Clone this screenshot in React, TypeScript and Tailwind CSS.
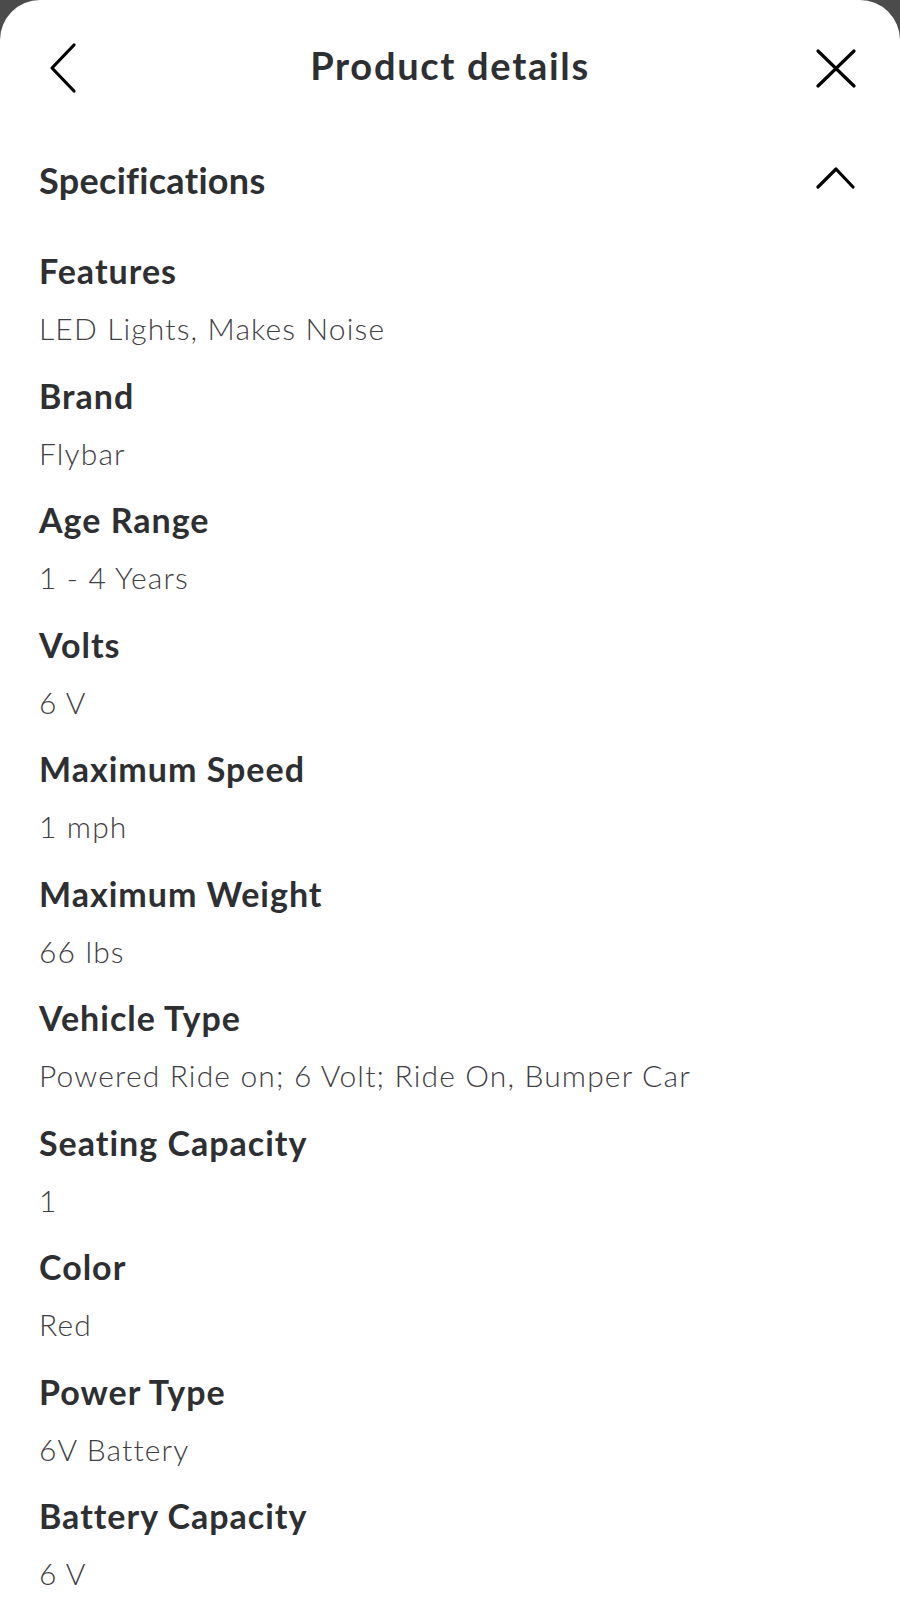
const specs: { label: string; value: string }[] = [
  { label: 'Features', value: 'LED Lights, Makes Noise' },
  { label: 'Brand', value: 'Flybar' },
  { label: 'Age Range', value: '1 - 4 Years' },
  { label: 'Volts', value: '6 V' },
  { label: 'Maximum Speed', value: '1 mph' },
  { label: 'Maximum Weight', value: '66 lbs' },
  { label: 'Vehicle Type', value: 'Powered Ride on; 6 Volt; Ride On, Bumper Car' },
  { label: 'Seating Capacity', value: '1' },
  { label: 'Color', value: 'Red' },
  { label: 'Power Type', value: '6V Battery' },
  { label: 'Battery Capacity', value: '6 V' },
];

export default function App() {
  return (
    <div className="h-[1600px] w-[900px] overflow-hidden bg-[#4b4b4b] font-['Lato',sans-serif] [font-variant-ligatures:none]">
      <div className="h-full rounded-t-[40px] bg-white text-[#2e2f32]">
        {/* Header */}
        <div className="grid h-[130px] grid-cols-[1fr_auto_1fr] items-start">
          <button type="button" className="ml-[48px] mt-[40px] justify-self-start">
            <svg width="30" height="56" viewBox="0 0 30 56" fill="none">
              <polyline
                points="26,5 4,28 26,51"
                stroke="#000"
                strokeWidth="3.2"
                strokeLinecap="round"
                strokeLinejoin="round"
              />
            </svg>
          </button>
          <h1 className="mt-[40px] text-[38px] font-bold leading-[50px] tracking-[1.7px]">
            Product details
          </h1>
          <button type="button" className="mr-[44px] mt-[49px] justify-self-end">
            <svg width="40" height="40" viewBox="0 0 40 40" fill="none">
              <path d="M2 2L38 37M38 2L2 37" stroke="#000" strokeWidth="3.2" strokeLinecap="round" />
            </svg>
          </button>
        </div>

        {/* Specifications accordion */}
        <div className="flex h-[100px] items-center justify-between pl-[39px] pr-[44px]">
          <h2 className="text-[36px] font-bold leading-[50px] tracking-[0.3px]">Specifications</h2>
          <svg width="40" height="24" viewBox="0 0 40 24" fill="none" className="mt-[-4px]">
            <polyline
              points="2,21 20,3 37,21"
              stroke="#000"
              strokeWidth="3.2"
              strokeLinecap="round"
              strokeLinejoin="round"
            />
          </svg>
        </div>

        <div className="flex flex-col px-[39px] pt-[17px]">
          {specs.map((s) => (
            <div key={s.label} className="pb-[10.5px]">
              <div className="text-[34px] font-bold leading-[48px] tracking-[1px]">{s.label}</div>
              <div className="text-[30px] font-light leading-[66px] tracking-[1.15px] text-[#3f4044]">
                {s.value}
              </div>
            </div>
          ))}
        </div>
      </div>
    </div>
  );
}
